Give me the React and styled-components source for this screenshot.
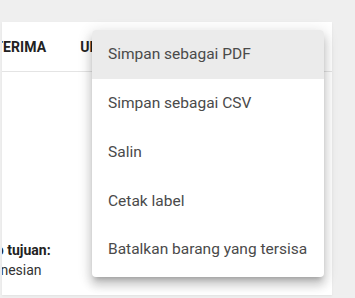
import React from 'react';
import styled, { createGlobalStyle } from 'styled-components';

const GlobalStyle = createGlobalStyle`
  html, body {
    margin: 0;
    padding: 0;
    background: #efefef;
    font-family: Roboto, "Liberation Sans", sans-serif;
  }
`;

const Page = styled.div`
  position: relative;
  width: 355px;
  height: 298px;
  padding: 22px 0 0 2px;
  box-sizing: border-box;
  overflow: hidden;
`;

const Card = styled.div`
  width: 330px;
  height: 273px;
  background: #fff;
  box-shadow: 0 1px 2px rgba(0, 0, 0, 0.06);
  display: flex;
  flex-direction: column;
  overflow: hidden;
`;

const TabRow = styled.div`
  display: flex;
  height: 49px;
  align-items: center;
  border-bottom: 1px solid #e4e4e4;
  margin-left: -38px;
  flex-shrink: 0;
`;

const Tab = styled.div`
  padding: 0 17px;
  font-size: 14px;
  font-weight: 700;
  letter-spacing: 0.1px;
  color: #222;
  text-transform: uppercase;
  white-space: nowrap;
`;

const Body = styled.div`
  flex: 1;
  display: flex;
  flex-direction: column;
  justify-content: flex-end;
  padding-bottom: 15px;
  margin-left: -29px;
`;

const Label = styled.div`
  font-size: 14px;
  line-height: 20px;
  color: ${(p) => (p.bold ? '#222' : '#333')};
  font-weight: ${(p) => (p.bold ? 700 : 400)};
  white-space: nowrap;
`;

const Menu = styled.ul`
  position: absolute;
  left: 92px;
  top: 30px;
  width: 232px;
  margin: 0;
  padding: 0 0 3px;
  list-style: none;
  background: #fff;
  border-radius: 4px;
  overflow: hidden;
  box-shadow: 0 5px 5px -3px rgba(0, 0, 0, 0.2), 0 8px 10px 1px rgba(0, 0, 0, 0.14),
    0 3px 14px 2px rgba(0, 0, 0, 0.12);
`;

const Item = styled.li`
  height: 48.75px;
  display: flex;
  align-items: center;
  padding: 0 16px;
  font-size: 15.5px;
  color: #4a4a4a;
  background: ${(p) => (p.active ? '#ebebeb' : 'transparent')};
  white-space: nowrap;
`;

const items = [
  'Simpan sebagai PDF',
  'Simpan sebagai CSV',
  'Salin',
  'Cetak label',
  'Batalkan barang yang tersisa',
];

export default function App() {
  return (
    <>
      <GlobalStyle />
      <Page>
        <Card>
          <TabRow>
            <Tab>Diterima</Tab>
            <Tab>Ulasan</Tab>
          </TabRow>
          <Body>
            <Label bold>Toko tujuan:</Label>
            <Label>Indonesian</Label>
          </Body>
        </Card>
        <Menu>
          {items.map((text, i) => (
            <Item key={text} active={i === 0}>
              {text}
            </Item>
          ))}
        </Menu>
      </Page>
    </>
  );
}
